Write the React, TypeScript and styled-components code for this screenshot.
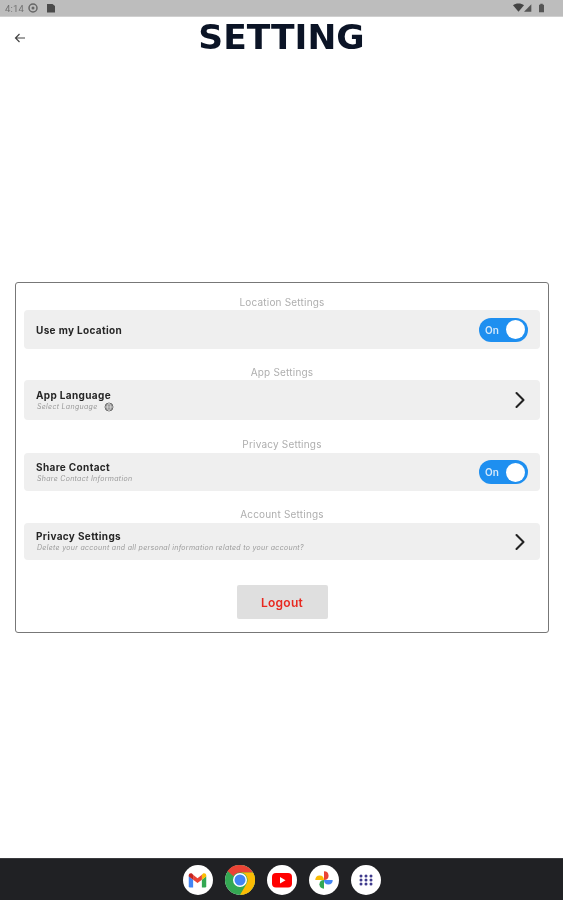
import React from "react";
import styled, { createGlobalStyle } from "styled-components";
import { FiChevronRight } from "react-icons/fi";

const GlobalStyle = createGlobalStyle`
  html, body {
    margin: 0;
    padding: 0;
    background: #fff;
  }
  body {
    font-family: Inter, "Liberation Sans", sans-serif;
  }
`;

// the source capture is a soft, upscaled screenshot
const Screen = styled.div`
  width: 563px;
  height: 900px;
  display: flex;
  flex-direction: column;
  overflow: hidden;
  background: #fff;
  filter: blur(0.4px);
`;

const StatusBar = styled.div`
  height: 17px;
  flex: none;
  background: #bdbdbd;
  display: flex;
  align-items: center;
  justify-content: space-between;
  padding: 0 19px 0 5px;
  box-sizing: border-box;
  border-bottom: 1px solid #d0d0d0;
  color: #555;
`;

const StatusGroup = styled.div`
  display: flex;
  align-items: center;
  gap: 4px;
`;

const Clock = styled.span`
  font-family: Roboto, sans-serif;
  font-size: 9.5px;
  color: #707070;
  letter-spacing: 0.2px;
`;

const SimSlot = styled.svg`
  margin-left: 4px;
`;

const Header = styled.header`
  height: 41px;
  flex: none;
  display: flex;
  align-items: center;
  justify-content: center;
  position: relative;
`;

const BackButton = styled.div`
  position: absolute;
  left: 13px;
  top: 12px;
  width: 14px;
  height: 14px;
  color: #444;
`;

const Title = styled.h1`
  margin: 0;
  font-family: "DejaVu Sans", Inter, sans-serif;
  font-size: 34.5px;
  line-height: 41px;
  font-weight: 700;
  color: #0b1426;
`;

const Main = styled.main`
  flex: 1;
  padding: 224px 14px 0 15px;
`;

const Card = styled.section`
  height: 351px;
  box-sizing: border-box;
  border: 1px solid #777;
  border-radius: 3px;
  padding: 12px 8px 0;
  display: flex;
  flex-direction: column;
`;

const SectionLabel = styled.div<{ $gap: number; $after?: number }>`
  text-align: center;
  font-size: 10px;
  line-height: 15px;
  color: #aeaeae;
  letter-spacing: 0.2px;
  margin-top: ${(p) => p.$gap}px;
  margin-bottom: ${(p) => p.$after ?? 0}px;
`;

const Row = styled.div<{ $height: number }>`
  height: ${(p) => p.$height}px;
  flex: none;
  background: #efefef;
  border-radius: 4px;
  display: flex;
  align-items: center;
  justify-content: space-between;
  padding: 0 12px;
`;

const RowText = styled.div`
  display: flex;
  flex-direction: column;
  gap: 1px;
`;

const RowTitle = styled.div`
  font-size: 10px;
  line-height: 12px;
  font-weight: 700;
  color: #262626;
  letter-spacing: 0.35px;
`;

const RowHint = styled.div`
  display: flex;
  align-items: center;
  gap: 7px;
  font-size: 7px;
  line-height: 10px;
  font-style: italic;
  color: #9a9a9a;
  letter-spacing: 0.3px;
  padding-left: 1px;
`;

const Toggle = styled.div`
  width: 49px;
  height: 24px;
  border-radius: 12px;
  background: #1e8ff0;
  display: flex;
  align-items: center;
  justify-content: space-between;
  padding: 0 3px 0 6px;
  box-sizing: border-box;
`;

const ToggleLabel = styled.span`
  font-size: 10px;
  font-weight: 600;
  color: #d5e9fb;
`;

const ToggleKnob = styled.span`
  width: 19px;
  height: 19px;
  border-radius: 50%;
  background: #fff;
`;

const Chevron = styled(FiChevronRight)`
  width: 28px;
  height: 28px;
  stroke-width: 1.8;
  color: #222;
  margin-right: -6px;
`;

const LogoutButton = styled.button`
  align-self: center;
  width: 91px;
  height: 34px;
  margin-top: 25px;
  border: 0;
  border-radius: 2px;
  background: #dfdfdf;
  color: #e8281f;
  font-family: inherit;
  font-size: 12px;
  font-weight: 600;
  letter-spacing: 0.25px;
`;

const Dock = styled.nav`
  height: 42px;
  flex: none;
  box-sizing: border-box;
  background: #202124;
  border-top: 1px solid #3a3b3e;
  display: flex;
  align-items: center;
  justify-content: center;
  gap: 12px;
  padding-top: 1px;
`;

const DockIcon = styled.div`
  width: 30px;
  height: 30px;
  border-radius: 50%;
  background: #fff;
  display: flex;
  align-items: center;
  justify-content: center;
`;

const BackArrow = () => (
  <svg viewBox="0 0 14 14" width="14" height="14" fill="none" stroke="currentColor" strokeWidth="1.2">
    <path d="M12 7H2.5M6.5 3L2.5 7l4 4" />
  </svg>
);

const GlobeIcon = () => (
  <svg viewBox="0 0 10 10" width="10" height="10" fill="none" stroke="#6f6f6f" strokeWidth="1">
    <circle cx="5" cy="5" r="4" fill="#9a9a9a" />
    <path d="M1 5h8M5 1c-2.2 2.4-2.2 5.6 0 8M5 1c2.2 2.4 2.2 5.6 0 8" strokeWidth="0.6" stroke="#e4e4e4" />
  </svg>
);

const GmailLogo = () => (
  <svg viewBox="0 0 24 24" width="21" height="21">
    <path d="M2 7v11.5A1.5 1.5 0 0 0 3.500 20H7v-9z" fill="#4285f4" />
    <path d="M22 7v11.500a1.500 1.500 0 0 1-1.500 1.500H17v-9z" fill="#34a853" />
    <path d="M17 5.500V11l5-3.700V6c0-2-2.200-3-3.700-1.900z" fill="#fbbc04" />
    <path d="M7 11V5.500l5 3.800 5-3.800V11l-5 3.800z" fill="#ea4335" />
    <path d="M2 6v1.300L7 11V5.500L5.700 4.100C4.200 3 2 4 2 6z" fill="#c5221f" />
  </svg>
);

const ChromeLogo = () => (
  <svg viewBox="0 0 30 30" width="30" height="30">
    <circle cx="15" cy="15" r="15" fill="#34a853" />
    <path d="M15 0a15 15 0 0 1 13 7.500H15a7.500 7.500 0 0 0-6.500 3.750L2.500 6A15 15 0 0 1 15 0z" fill="#ea4335" />
    <path d="M28 7.500A15 15 0 0 1 15 30l6.500-11.250A7.500 7.500 0 0 0 21.500 11.250 7.500 7.500 0 0 0 15 7.500z" fill="#fbbc04" />
    <circle cx="15" cy="15" r="7" fill="#fff" />
    <circle cx="15" cy="15" r="5.500" fill="#4285f4" />
  </svg>
);

const YoutubeLogo = () => (
  <svg viewBox="0 0 24 24" width="24" height="24">
    <rect x="2" y="5" width="20" height="14.500" rx="4" fill="#f00" />
    <path d="M10 9l5.500 3.200L10 15.500z" fill="#fff" />
  </svg>
);

const PhotosLogo = () => (
  <svg viewBox="0 0 24 24" width="22" height="22">
    <path d="M12 12V2.500a5 5 0 0 1 5 4.750A5 5 0 0 1 12 12z" fill="#ea4335" />
    <path d="M12 12h9.500a5 5 0 0 1-4.750 5A5 5 0 0 1 12 12z" fill="#4285f4" />
    <path d="M12 12v9.500a5 5 0 0 1-5-4.750A5 5 0 0 1 12 12z" fill="#34a853" />
    <path d="M12 12H2.500a5 5 0 0 1 4.750-5A5 5 0 0 1 12 12z" fill="#fbbc04" />
  </svg>
);

const AppsGrid = () => (
  <svg viewBox="0 0 16 12" width="16" height="12" fill="#3f3a8c">
    {[2, 6, 10].map((y) =>
      [3, 8, 13].map((x) => <circle key={`${x}-${y}`} cx={x} cy={y} r="1.500" />)
    )}
  </svg>
);

const OnToggle = () => (
  <Toggle>
    <ToggleLabel>On</ToggleLabel>
    <ToggleKnob />
  </Toggle>
);

export default function App() {
  return (
    <Screen>
      <GlobalStyle />
      <StatusBar>
        <StatusGroup>
          <Clock>4:14</Clock>
          <svg viewBox="0 0 10 10" width="10" height="10">
            <circle cx="5" cy="5" r="4" fill="none" stroke="#666" strokeWidth="1.500" />
            <circle cx="5" cy="5" r="1.500" fill="#666" />
          </svg>
          <SimSlot viewBox="0 0 10 10" width="10" height="10">
            <path d="M1 1h5.500L9 3v6.500H1z" fill="#4a4a4a" />
          </SimSlot>
        </StatusGroup>
        <StatusGroup>
          <svg viewBox="0 0 24 10" width="22" height="10">
            <path d="M0 2c3-2.500 9-2.500 12 0L6 9z" fill="#444" />
            <path d="M20 1v8h-8z" fill="#555" />
          </svg>
          <svg viewBox="0 0 6 10" width="5" height="10">
            <path d="M1.500 0h3v1H6v9H0V1h1.500z" fill="#555" />
          </svg>
        </StatusGroup>
      </StatusBar>
      <Header>
        <BackButton>
          <BackArrow />
        </BackButton>
        <Title>SETTING</Title>
      </Header>
      <Main>
        <Card>
          <SectionLabel $gap={0}>Location Settings</SectionLabel>
          <Row $height={39}>
            <RowTitle>Use my Location</RowTitle>
            <OnToggle />
          </Row>
          <SectionLabel $gap={16}>App Settings</SectionLabel>
          <Row $height={40}>
            <RowText>
              <RowTitle>App Language</RowTitle>
              <RowHint>
                Select Language <GlobeIcon />
              </RowHint>
            </RowText>
            <Chevron />
          </Row>
          <SectionLabel $gap={17} $after={1}>Privacy Settings</SectionLabel>
          <Row $height={38}>
            <RowText>
              <RowTitle>Share Contact</RowTitle>
              <RowHint>Share Contact Information</RowHint>
            </RowText>
            <OnToggle />
          </Row>
          <SectionLabel $gap={16} $after={1}>Account Settings</SectionLabel>
          <Row $height={37}>
            <RowText>
              <RowTitle>Privacy Settings</RowTitle>
              <RowHint>Delete your account and all personal information related to your account?</RowHint>
            </RowText>
            <Chevron />
          </Row>
          <LogoutButton>Logout</LogoutButton>
        </Card>
      </Main>
      <Dock>
        <DockIcon>
          <GmailLogo />
        </DockIcon>
        <DockIcon>
          <ChromeLogo />
        </DockIcon>
        <DockIcon>
          <YoutubeLogo />
        </DockIcon>
        <DockIcon>
          <PhotosLogo />
        </DockIcon>
        <DockIcon>
          <AppsGrid />
        </DockIcon>
      </Dock>
    </Screen>
  );
}
